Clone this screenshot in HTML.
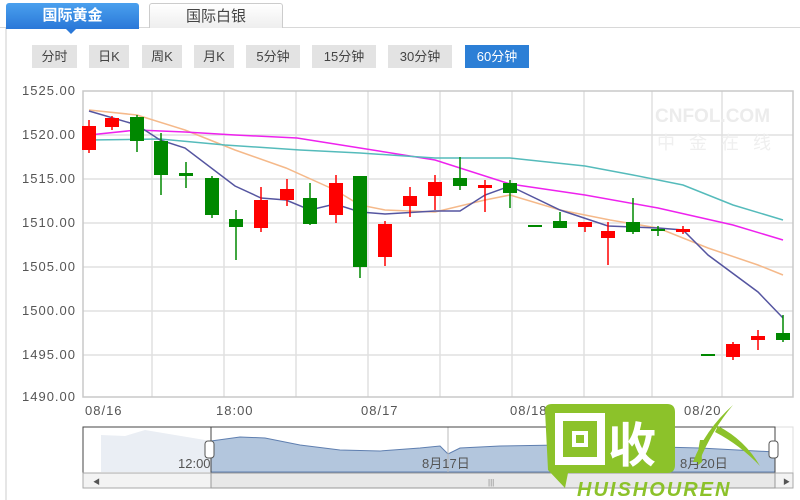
<!DOCTYPE html>
<html><head><meta charset="utf-8"><style>
body{margin:0;width:800px;height:500px;overflow:hidden;background:#fff;font-family:"Liberation Sans","Noto Sans CJK SC",sans-serif;position:relative}
.tab{position:absolute;top:3px;height:24px;line-height:26px;text-align:center;font-size:15px;border-radius:3px 3px 0 0}
.b{position:absolute;top:45px;height:23px;line-height:23px;background:#e3e3e3;color:#444;font-size:13px;text-align:center}
</style></head><body>
<div style="position:absolute;left:0;top:27px;width:800px;height:1px;background:#d8d8d8"></div>
<div style="position:absolute;left:5px;top:28px;width:2px;height:472px;background:#e6e6e6"></div>
<div class="tab" style="left:6px;width:133px;background:linear-gradient(#4aa0ee,#2a78d8);color:#fff;font-weight:bold;height:26px">国际黄金</div>
<div style="position:absolute;left:66px;top:29px;border:5px solid transparent;border-top-color:#2a78d8"></div>
<div class="tab" style="left:149px;width:132px;background:linear-gradient(#fff,#eee);border:1px solid #ccc;border-bottom:none;color:#444">国际白银</div>
<div class="b" style="left:32px;width:45px">分时</div>
<div class="b" style="left:89px;width:40px">日K</div>
<div class="b" style="left:142px;width:40px">周K</div>
<div class="b" style="left:194px;width:40px">月K</div>
<div class="b" style="left:246px;width:54px">5分钟</div>
<div class="b" style="left:312px;width:64px">15分钟</div>
<div class="b" style="left:388px;width:64px">30分钟</div>
<div class="b" style="left:465px;width:64px;background:#2c7fd6;color:#fff">60分钟</div>
<svg width="800" height="500" style="position:absolute;left:0;top:0">
<g stroke="#e0e0e0" stroke-width="1.5">
<line x1="152" y1="91" x2="152" y2="397"/><line x1="224" y1="91" x2="224" y2="397"/><line x1="296" y1="91" x2="296" y2="397"/><line x1="368" y1="91" x2="368" y2="397"/><line x1="440" y1="91" x2="440" y2="397"/><line x1="512" y1="91" x2="512" y2="397"/><line x1="584" y1="91" x2="584" y2="397"/><line x1="652" y1="91" x2="652" y2="397"/><line x1="722" y1="91" x2="722" y2="397"/>
<line x1="83" y1="135" x2="793" y2="135"/><line x1="83" y1="179" x2="793" y2="179"/><line x1="83" y1="223" x2="793" y2="223"/><line x1="83" y1="267" x2="793" y2="267"/><line x1="83" y1="311" x2="793" y2="311"/><line x1="83" y1="355" x2="793" y2="355"/>
</g>
<rect x="83" y="91" width="710" height="306" fill="none" stroke="#c8c8c8" stroke-width="1.5"/>
<text x="655" y="122" font-size="19" font-weight="bold" fill="#ececec">CNFOL.COM</text>
<text x="657" y="149" font-size="18" fill="#efefef" letter-spacing="14">中金在线</text>
<g font-size="13" fill="#555" letter-spacing="1">
<text x="22" y="95">1525.00</text><text x="22" y="139">1520.00</text><text x="22" y="183">1515.00</text><text x="22" y="227">1510.00</text><text x="22" y="271">1505.00</text><text x="22" y="315">1500.00</text><text x="22" y="359">1495.00</text><text x="22" y="401">1490.00</text>
<text x="85" y="415">08/16</text><text x="216" y="415">18:00</text><text x="361" y="415">08/17</text><text x="510" y="415">08/18</text><text x="684" y="415">08/20</text>
</g>
<g stroke-width="1.5" fill="none">
<polyline stroke="#f5b98a" points="89,110 137,115 185,130 235,150 286,168 335,190 360,205 385,210 435,212 485,200 510,195 560,210 610,220 658,228 708,248 758,265 783,275"/>
<polyline stroke="#ee22ee" points="89,135 137,130 185,132 235,135 297,138 360,148 435,160 510,184 585,195 658,208 733,225 783,240"/>
<polyline stroke="#55bbbb" points="89,140 160,139 225,145 300,150 360,153 435,158 510,158 585,166 633,175 683,185 733,205 783,220"/>
<polyline stroke="#5555a0" points="89,111 137,125 160,140 185,148 235,186 261,198 286,200 310,210 335,204 360,212 385,214 435,211 460,211 485,195 510,186 560,210 608,226 658,228 683,230 708,255 758,292 783,318"/>
</g>
<g id="c"></g>
</svg>
<script>
var d=[[89,'r',126,150,120,153],[112,'r',118,127,116,130],[137,'g',117,141,115,152],[161,'g',141,175,133,195],[186,'g',173,176,162,188],[212,'g',178,215,176,218],[236,'g',219,227,210,260],[261,'r',200,228,187,232],[287,'r',189,200,179,206],[310,'g',198,224,183,225],[336,'r',183,215,175,223],[360,'g',176,267,176,278],[385,'r',224,257,221,266],[410,'r',196,206,187,217],[435,'r',182,196,175,210],[460,'g',178,186,157,190],[485,'r',185,188,180,212],[510,'g',183,193,180,208],[535,'g',225,226,225,226],[560,'g',221,228,212,228],[585,'r',222,227,222,232],[608,'r',231,238,222,265],[633,'g',222,232,198,234],[658,'g',229,231,226,236],[683,'r',229,232,226,234],[708,'g',354,355,354,355],[733,'r',344,357,342,360],[758,'r',336,340,330,350],[783,'g',333,340,315,342]];
var s='';d.forEach(function(c){var col=c[1]=='r'?'#f00':'#080';s+='<line x1="'+c[0]+'" x2="'+c[0]+'" y1="'+c[4]+'" y2="'+c[5]+'" stroke="'+col+'" stroke-width="1.5"/><rect x="'+(c[0]-7)+'" y="'+c[2]+'" width="14" height="'+Math.max(2,c[3]-c[2])+'" fill="'+col+'"/>';});
document.getElementById('c').innerHTML=s;
</script>
<svg width="800" height="500" style="position:absolute;left:0;top:0">
<rect x="83" y="427" width="710" height="46" fill="#fff" stroke="#ddd"/>
<path d="M101,472 L101,435 L125,436 L145,430 L175,435 L211,441 L211,472Z" fill="#eaeef4"/>
<path d="M211,441 L240,437 L265,438 L300,445 L340,450 L380,451 L420,448 L440,446 L448,454 L460,448 L500,446 L560,445 L620,446 L700,448 L775,452 L775,472 L211,472Z" fill="#b3c6dd" stroke="#5f7fb0" stroke-width="1"/>
<line x1="448" y1="427" x2="448" y2="472" stroke="#bbb"/>
<rect x="83" y="427" width="128" height="46" fill="none" stroke="#444"/>
<rect x="211" y="427" width="564" height="46" fill="none" stroke="#444"/>
<rect x="205" y="441" width="9" height="17" rx="3" fill="#fff" stroke="#555"/>
<rect x="769" y="441" width="9" height="17" rx="3" fill="#fff" stroke="#555"/>
<g font-size="13" fill="#555"><text x="178" y="468">12:00</text><text x="422" y="468">8月17日</text><text x="680" y="468">8月20日</text></g>
<rect x="83" y="473" width="710" height="15" fill="#f3f3f3" stroke="#aaa"/>
<rect x="211" y="473" width="564" height="15" fill="#e8e8e8" stroke="#999"/>
<text x="488" y="485" font-size="8" fill="#888">|||</text>
<text x="93" y="484" font-size="7" fill="#555">◀</text><text x="783" y="484" font-size="7" fill="#555">▶</text>
<path d="M552,404 L667,404 Q675,404 675,412 L675,465 Q675,473 667,473 L568,473 L565,488 L548,470 L545,410 Q545,404 552,404 Z" fill="#8cc22a"/>
<rect x="555" y="413" width="50" height="52" fill="#fff"/><rect x="563" y="421" width="34" height="36" fill="#8cc22a"/><rect x="572" y="431" width="16" height="16" fill="#fff"/><rect x="576" y="435" width="8" height="8" fill="#8cc22a"/>
<text x="608" y="462" font-size="48" font-weight="bold" fill="#fff" font-family="Noto Sans CJK SC,sans-serif">收</text>
<path d="M693,462 Q705,430 733,405 Q712,430 699,462 Z" fill="#8cc22a"/>
<path d="M718,426 Q745,440 760,466 Q740,445 715,432 Z" fill="#8cc22a"/>
<path d="M700,440 Q697,455 698,465 L702,462 Q701,452 704,440Z" fill="#8cc22a"/>
<text x="577" y="496" font-size="20" font-weight="bold" font-style="italic" fill="#8cc22a" letter-spacing="2">HUISHOUREN</text>
</svg>
</body></html>
